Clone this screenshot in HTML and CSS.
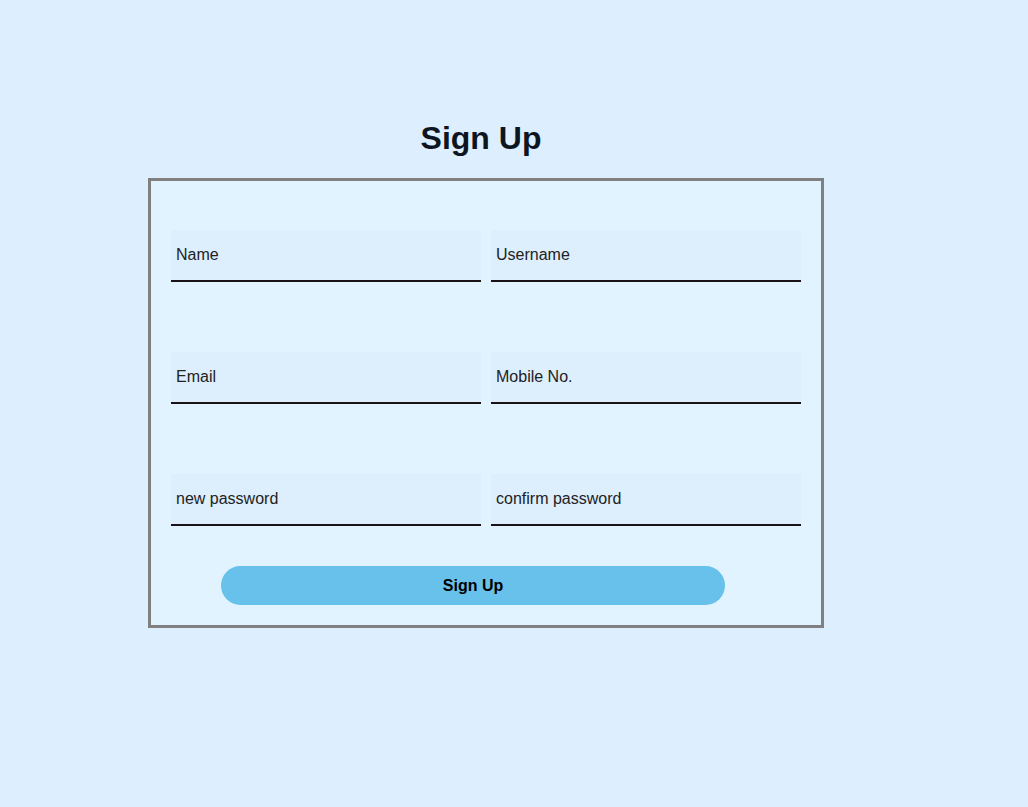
FILE: index.html
```html
<!DOCTYPE html>
<html>
<head>
<meta charset="utf-8">
<link rel="stylesheet" href="styles.css">
</head>
<body>
<div class="page">
  <h1 class="title">Sign Up</h1>
  <form class="card">
    <div class="row">
      <input class="field" type="text" placeholder="Name">
      <input class="field" type="text" placeholder="Username">
    </div>
    <div class="row">
      <input class="field" type="email" placeholder="Email">
      <input class="field" type="text" placeholder="Mobile No.">
    </div>
    <div class="row">
      <input class="field" type="password" placeholder="new password">
      <input class="field" type="password" placeholder="confirm password">
    </div>
    <button class="btn" type="button">Sign Up</button>
  </form>
</div>
</body>
</html>
```
FILE: styles.css
```css
html, body {
  margin: 0;
  padding: 0;
  background: #ddeeff;
  font-family: "Liberation Sans", Arial, sans-serif;
}
.page {
  padding-top: 120px;
  padding-left: 148px;
}
.title {
  box-sizing: border-box;
  width: 676px;
  padding-right: 10px;
  margin: 0 0 21px 0;
  font-size: 32px;
  line-height: 37px;
  font-weight: bold;
  text-align: center;
  color: #0d1620;
}
.card {
  box-sizing: border-box;
  width: 676px;
  height: 450px;
  margin: 0;
  border: 3px solid #808080;
  background: #e1f3ff;
  padding: 49px 19px 20px 20px;
  display: flex;
  flex-direction: column;
}
.row {
  display: flex;
  gap: 10px;
  margin-bottom: 70px;
}
.row:nth-child(3) {
  margin-bottom: 40px;
}
.field {
  box-sizing: border-box;
  width: 310px;
  height: 52px;
  margin: 0;
  padding: 0 5px;
  border: none;
  border-bottom: 2px solid #1a1216;
  background: #ddeefd;
  font-family: "Liberation Sans", Arial, sans-serif;
  font-size: 16px;
  color: #222;
  outline: none;
}
.field::placeholder {
  color: #222;
  opacity: 1;
}
.btn {
  width: 504px;
  height: 40px;
  margin: 0 0 0 50px;
  border: none;
  border-radius: 20px;
  background: #68c1ea;
  color: #000;
  font-family: "Liberation Sans", Arial, sans-serif;
  font-size: 16px;
  font-weight: bold;
}
```
